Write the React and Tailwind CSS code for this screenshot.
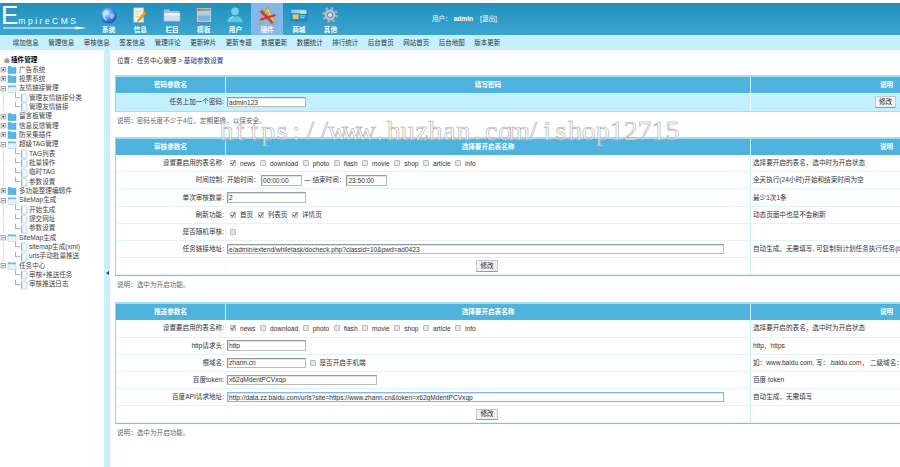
import React from "react";

const FONT = '"Liberation Sans","Noto Sans CJK SC",sans-serif';

const Globe = () => (
  <svg viewBox="0 0 20 20" className="w-[17px] h-[17px]">
    <defs>
      <radialGradient id="gl" cx="40%" cy="35%" r="70%">
        <stop offset="0" stopColor="#dff3ff" />
        <stop offset="0.45" stopColor="#4a9be8" />
        <stop offset="1" stopColor="#0f4fb5" />
      </radialGradient>
    </defs>
    <circle cx="10" cy="10" r="9.500" fill="url(#gl)" />
    <path d="M6 4c3-1 4 1 3 3s-3 2-3 4 3 3 2 5c-2 0-5-3-5-7 0-2 1-4 3-5z" fill="#cfe9fb" opacity=".75" />
    <path d="M13 8c2-1 4 0 4 2s-2 4-3 4-2-1-2-3 0-2 1-3z" fill="#cfe9fb" opacity=".6" />
  </svg>
);
const Note = () => (
  <svg viewBox="0 0 20 20" className="w-[18px] h-[18px]">
    <path d="M3 2h11v16H3z" fill="#f6f1df" stroke="#c9bf9f" strokeWidth=".6" />
    <path d="M5 6h7M5 9h6M5 12h5" stroke="#cfc5a5" strokeWidth=".8" />
    <path d="M8 15l8-10 2 2-8 9-3 1z" fill="#f0a21c" stroke="#b8730e" strokeWidth=".5" />
    <path d="M15 6l1-1.500 2 2-1 1.500z" fill="#d9562b" />
  </svg>
);
const Folder = () => (
  <svg viewBox="0 0 20 20" className="w-[18px] h-[18px]">
    <path d="M1 5a1 1 0 0 1 1-1h5l1 1.500h9.500a1 1 0 0 1 1 1V8H1z" fill="#a9bfd6" />
    <path d="M1 7.500h18V16a1 1 0 0 1-1 1H2a1 1 0 0 1-1-1z" fill="#cfdfef" stroke="#8fa9c4" strokeWidth=".5" />
    <path d="M1.500 8h17v2.500h-17z" fill="#eef4fa" />
  </svg>
);
const Win = () => (
  <svg viewBox="0 0 20 20" className="w-[18px] h-[18px]">
    <rect x="1.500" y="2" width="17" height="16" fill="#c9d3dc" stroke="#5d7183" strokeWidth=".7" />
    <rect x="2.500" y="3" width="15" height="2.500" fill="#a89a6e" />
    <rect x="3" y="3.500" width="2" height="1.500" fill="#c75b3a" />
    <rect x="6" y="3.500" width="2" height="1.500" fill="#6aa84f" />
    <rect x="3" y="6.500" width="14" height="10" fill="#7fb4de" />
    <rect x="3" y="6.500" width="14" height="4" fill="#a9d0ec" />
  </svg>
);
const User = () => (
  <svg viewBox="0 0 20 20" className="w-[18px] h-[18px]">
    <circle cx="10" cy="6" r="4.200" fill="#6fd3e6" />
    <path d="M1.500 18c0-4 3-6.500 6-7 1.500 1 3.500 1 5 0 3 .5 6 3 6 7z" fill="#5cc6dc" />
    <path d="M3.500 17c.5-2.500 2-4 4-4.800" stroke="#b5ecf5" strokeWidth="1" fill="none" />
  </svg>
);
const Tools = () => (
  <svg viewBox="0 0 20 20" className="w-[19px] h-[19px]">
    <path d="M9.500 1.500L3 16l-1 3 2.500-2L11 4z" fill="#f2c53d" stroke="#a87c12" strokeWidth=".4" />
    <path d="M10.500 1.500L17 16l1 3-2.500-2L9 4z" fill="#f5d766" stroke="#a87c12" strokeWidth=".4" />
    <path d="M2 13.500L18 8.500l.7 2L2.700 15.500z" fill="#d8322a" />
    <path d="M1.500 6l3-2 12 13-2 2z" fill="#c4372c" opacity=".85" />
  </svg>
);
const Card = () => (
  <svg viewBox="0 0 20 20" className="w-[18px] h-[18px]">
    <rect x="1" y="3.500" width="18" height="13" rx="1" fill="#1f8fcf" stroke="#0f6ca6" strokeWidth=".5" />
    <rect x="1.500" y="4" width="17" height="4" fill="#8ad3f2" />
    <path d="M3 9.500h7l-1 5H3z" fill="#f3c24c" />
    <path d="M11 6.500c2-1.500 5-1.500 7 0v2h-7z" fill="#f7e07e" />
    <path d="M11 11h6M11 13h5" stroke="#d6f0fb" strokeWidth=".8" />
  </svg>
);
const Gear = () => (
  <svg viewBox="0 0 20 20" className="w-[18px] h-[18px]">
    <circle cx="10" cy="10" r="7.200" fill="none" stroke="#a4adb6" strokeWidth="3.400" strokeDasharray="2.700 2.950" />
    <circle cx="10" cy="10" r="6" fill="#b9c2ca" />
    <circle cx="10" cy="10" r="3.400" fill="#6f8ba3" />
    <circle cx="10" cy="10" r="2.200" fill="#dfe6ec" />
  </svg>
);

const tabs = [
  [Globe, "系统"], [Note, "信息"], [Folder, "栏目"], [Win, "模板"],
  [User, "用户"], [Tools, "插件", true], [Card, "商城"], [Gear, "其他"],
];
const navs = ["增加信息", "管理信息", "审核信息", "签发信息", "管理评论", "更新碎片", "更新专题", "数据更新", "数据统计", "排行统计", "后台首页", "网站首页", "后台地图", "版本更新"];

const Header = () => (
  <div className="h-[32px] flex bg-gradient-to-b from-[#2190be] to-[#3ba5cf] text-white">
    <div className="w-[92.800px] shrink-0 relative pl-[1px]">
      <div className="flex items-end h-[25px]">
        <span className="text-[26px] leading-[26px] font-normal">E</span>
        <span className="text-[8.500px] leading-[14px] tracking-[2.500px] font-normal">mpireCMS</span>
      </div>
      <svg viewBox="0 0 88 4" className="absolute left-[3px] top-[22.500px] w-[86px] h-[4px]">
        <path d="M0 1.500H74V.5L86 2 74 3.500V2.500H0z" fill="#fff" />
      </svg>
    </div>
    <div className="flex shrink-0">
      {tabs.map(([I, t, on]) => (
        <div key={t} className={`w-[31.700px] flex flex-col items-center pt-[3px] ${on ? "bg-[#85b7e8]" : ""}`}>
          <div className="h-[18px] flex items-center justify-center"><I /></div>
          <span className="text-[6.600px] leading-[9px] font-bold mt-[1px]">{t}</span>
        </div>
      ))}
    </div>
    <div className="ml-[85.600px] flex items-center text-[6.600px]">
      <span>用户：</span><span className="font-bold ml-[2px]">admin</span><span className="ml-[7px]">[退出]</span>
    </div>
  </div>
);

const Nav = () => (
  <div className="h-[15px] bg-[#c6f0ff] flex items-center pl-[8px] text-[6.500px] text-[#333]">
    {navs.map((n) => (
      <span key={n} className="w-[35.500px] text-center shrink-0">{n}</span>
    ))}
  </div>
);

const Plus = ({ minus }) => (
  <g>
    <rect x="1" y="2.500" width="4.500" height="4.500" fill="#fff" stroke="#777" strokeWidth=".6" />
    <path d="M2 4.750h2.500" stroke="#222" strokeWidth=".7" />
    {!minus && <path d="M3.250 3.500V6" stroke="#222" strokeWidth=".7" />}
  </g>
);
const FolderIco = ({ open }) => (
  <g>
    <path d="M8 1.500h3l1 1h4v6H8z" fill={open ? "#e8f4fb" : "#55b7ea"} stroke={open ? "#8fc4e4" : "#3a9bd6"} strokeWidth=".5" />
    {open && <path d="M8 1.500h8v1.800H8z" fill="#6fbde8" />}
  </g>
);
const DocIco = () => (
  <g>
    <path d="M21.500 1h4l1.500 1.500v6.500h-5.500z" fill="#f4f9fd" stroke="#9cbcd4" strokeWidth=".6" />
    <path d="M21.800 1.500v7" stroke="#60a8d8" strokeWidth=".8" />
  </g>
);

const tree = [
  ["p", "广告系统"], ["p", "投票系统"], ["m", "友情链接管理"],
  ["c", "管理友情链接分类"], ["c", "管理友情链接"],
  ["p", "留言板管理"], ["p", "信息反馈管理"], ["p", "防采集插件"], ["m", "超级TAG管理"],
  ["c", "TAG列表"], ["c", "批量操作"], ["c", "临时TAG"], ["c", "参数设置"],
  ["p", "多功能整理编辑件"], ["m", "SiteMap生成"],
  ["c", "开始生成"], ["c", "提交网址"], ["c", "参数设置"],
  ["m", "SiteMap生成"], ["c", "sitemap生成(xml)"], ["c", "urls手动批量推送"],
  ["m", "任务中心"], ["e", "审核+推送任务"], ["e", "审核推送日志"],
];

const Tree = () => (
  <div className="w-[104px] shrink-0 pt-[5.500px] text-[6.600px] text-[#444] overflow-hidden">
    <div className="h-[9.350px] flex items-center pl-[4px] whitespace-nowrap">
      <svg viewBox="0 0 8 8" className="w-[6px] h-[6px] mr-[1px]">
        <path d="M4 .5L8 4 7 8H1L0 4z" fill="#e8a33a" />
        <path d="M2 4h4v4H2z" fill="#5aa6dc" />
      </svg>
      <span className="font-bold text-black">插件管理</span>
    </div>
    {tree.map(([k, t], i) => {
      const child = k === "c" || k === "e";
      return (
        <div key={i} className="h-[9.350px] flex items-center whitespace-nowrap">
          <svg viewBox="0 0 29 9.400" className="w-[29px] h-[9.350px] shrink-0 overflow-visible" style={{ marginRight: child ? 0 : -10 }}>
            {k === "c" && <path d="M3.250 0v9.400" stroke="#999" strokeWidth=".5" strokeDasharray="1 .6" />}
            {child && <path d="M15.500 0v4.700h5" stroke="#777" strokeWidth=".6" fill="none" />}
            {k === "p" && <Plus />}
            {k === "m" && <Plus minus />}
            {k === "p" && <FolderIco />}
            {k === "m" && <FolderIco open />}
            {child && <DocIco />}
          </svg>
          <span>{t}</span>
        </div>
      );
    })}
  </div>
);

const Box = ({ on }) => (
  <span className="w-[6px] h-[6px] shrink-0 border border-[#bbbbbb] bg-[#e6e6e6] rounded-[1px] flex items-center justify-center">
    {on && (
      <svg viewBox="0 0 6 6" className="w-[6px] h-[6px] shrink-0">
        <path d="M1 3l1.500 1.500L5 .5" stroke="#555" strokeWidth="1" fill="none" />
      </svg>
    )}
  </span>
);
const Check = ({ on, children }) => (
  <span className="inline-flex items-center">
    <Box on={on} />
    <span className="ml-[4px] mr-[4.500px] pt-[1px]">{children}</span>
  </span>
);
const Field = ({ w, value, focus, className = "" }) => (
  <input
    readOnly
    value={value}
    className={`${w} h-[10.500px] px-[1px] text-[6.600px] text-[#333] outline-none border ${focus ? "border-[#8ab4e8] bg-[#fbfdff] shadow-[inset_1px_1px_0_#d5e4f7]" : "border-t-[#999] border-l-[#999] border-r-[#bbb] border-b-[#bbb] bg-white shadow-[inset_1px_1px_0_#e2e2e2]"} ${className}`}
    style={{ fontFamily: FONT }}
  />
);
const Btn = () => (
  <button className="w-[21.500px] h-[11.500px] bg-[#f2f2f2] border border-[#c8c8c8] border-b-[#999] text-[6.600px] text-[#222] leading-none" style={{ fontFamily: FONT }}>修改</button>
);

const HeadRow = ({ a, b }) => (
  <div className="h-[16px] bg-[#4fb3de] grid grid-cols-[110px_525px_271px] text-white font-bold items-stretch">
    <div className="flex items-center justify-center border-r border-[#c6f0ff]">{a}</div>
    <div className="flex items-center justify-center border-r border-[#c6f0ff]">{b}</div>
    <div className="flex items-center justify-center">说明</div>
  </div>
);
const Row = ({ label, children, desc }) => (
  <div className="h-[17.200px] grid grid-cols-[110px_525px_271px] border-b border-[#dff4fc]">
    <div className="flex items-center justify-end pr-[1px] border-r border-[#f2fbff] text-[#333]">{label}</div>
    <div className="flex items-center pl-[1px] border-r border-[#c6f0ff] text-[#333] whitespace-nowrap">{children}</div>
    <div className="flex items-center pl-[2px] text-[#333] whitespace-nowrap overflow-hidden">{desc}</div>
  </div>
);
const Table = ({ children }) => (
  <div className="w-[907px] border-l border-t-2 border-b border-t-[#a3dff2] border-l-[#8fd6f0] border-b-[#6fc6ea]">
    {children}
  </div>
);
const Notice = ({ children, h }) => (
  <div className={`${h} pl-[2px] pt-[3.500px] text-[#666] leading-[10px]`}>{children}</div>
);
const names = ["download", "photo", "flash", "movie", "shop", "article", "info"];
const Tables = () => (
  <>
    <Check on>news</Check>
    {names.map((n) => <Check key={n}>{n}</Check>)}
  </>
);

const Watermark = () => (
  <div className="absolute left-[219.500px] top-[116px] flex pointer-events-none text-[28px] leading-[30px] text-white/60 [-webkit-text-stroke:0.6px_#aaaaaa]" style={{ fontFamily: '"Liberation Serif",serif' }}>
    {"https://www.huzhan.com/ishop12715".split("").map((c, i) => (
      <span key={i} className="w-[13.950px] flex justify-center">{c}</span>
    ))}
  </div>
);

export default function App() {
  return (
    <div className="w-[900px] h-[467px] overflow-hidden bg-white relative text-[6.600px]" style={{ fontFamily: FONT }}>
      <div className="h-[3px]" />
      <Header />
      <Nav />
      <div className="flex h-[417px]">
        <Tree />
        <div className="w-[6px] shrink-0 bg-[#c6f0ff] flex items-center justify-center">
          <span className="mt-[29px] w-0 h-0 border-y-[2px] border-y-transparent border-r-[3px] border-r-[#444]" />
        </div>
        <div className="pl-[5px] flex-1 min-w-0">
          <div className="h-[25px] pl-[2px] flex items-center text-[#333] pb-[3px]">
            位置：任务中心管理 &gt;&nbsp;<span className="text-[#1b2a80]">基础参数设置</span>
          </div>
          <div className="w-[907px] border-l border-t-2 border-b border-t-[#a3dff2] border-l-[#8fd6f0] border-b-[#a3dff2]">
            <HeadRow a="密码参数名" b="填写密码" />
            <div className="h-[18px] bg-[#c5efff] grid grid-cols-[110px_525px_271px] text-[#333]">
              <div className="flex items-center justify-end pr-[1px] border-r border-[#e4f8ff]">任务上加一个密码:</div>
              <div className="flex items-center pl-[1px] border-r border-[#e4f8ff]"><Field w="w-[78.500px]" value="admin123" /></div>
              <div className="flex items-center justify-center pr-[2px]"><Btn /></div>
            </div>
          </div>
          <Notice h="h-[25px]">说明：密码长度不少于4位，定期更换，以保安全。</Notice>
          <Table>
            <HeadRow a="审核参数名" b="选择要开启表名称" />
            <Row label="设置要启用的表名称:" desc="选择要开启的表名，选中时为开启状态"><span className="ml-[3px] flex items-center"><Tables /></span></Row>
            <Row label="时间控制:" desc="全天执行(24小时)开始和结束时间为空">
              <span>开始时间：</span><Field w="w-[41px]" value="00:00:00" className="ml-[1px]" />
              <span className="ml-[2px]">— 结束时间：</span><Field w="w-[41px]" value="23:50:00" className="ml-[1px]" />
            </Row>
            <Row label="单次审核数量:" desc="最少1次1条"><Field w="w-[78.500px]" value="2" /></Row>
            <Row label="刷新功能:" desc="动态页面中也是不会刷新">
              <span className="ml-[3px] flex items-center"><Check on>首页</Check><Check on>列表页</Check><Check on>详情页</Check></span>
            </Row>
            <Row label="是否随机审核:"><span className="ml-[3px]"><Box /></span></Row>
            <Row label="任务链接地址:" desc="自动生成、无需填写, 可复制到计划任务执行任务(d.lsp">
              <Field w="w-[497px]" value="e/admin/extend/whiletask/docheck.php?classid=10&pwd=ad0423" />
            </Row>
            <Row><span className="w-full flex justify-center pr-[3px]"><Btn /></span></Row>
          </Table>
          <Notice h="h-[26px]">说明：选中为开启功能。</Notice>
          <Table>
            <HeadRow a="推送参数名" b="选择要开启表名称" />
            <Row label="设置要启用的表名称:" desc="选择要开启的表名，选中时为开启状态"><span className="ml-[3px] flex items-center"><Tables /></span></Row>
            <Row label="http请求头:" desc="http、https"><Field w="w-[78.500px]" value="http" /></Row>
            <Row label="根域名:" desc="如：www.baidu.com, 写：.baidu.com， 二级域名：">
              <Field w="w-[78.500px]" value="zhann.cn" />
              <span className="ml-[4px] flex items-center"><Check>是否开启手机端</Check></span>
            </Row>
            <Row label="百度token:" desc="百度 token"><Field w="w-[150px]" value="x62gMdentPCVxqp" /></Row>
            <Row label="百度API请求地址:" desc="自动生成，无需填写">
              <Field w="w-[497px]" focus value="http://data.zz.baidu.com/urls?site=https://www.zhann.cn&token=x62gMdentPCVxqp" />
            </Row>
            <Row><span className="w-full flex justify-center pr-[3px]"><Btn /></span></Row>
          </Table>
          <Notice h="h-[26px]">说明：选中为开启功能。</Notice>
        </div>
      </div>
      <Watermark />
    </div>
  );
}
